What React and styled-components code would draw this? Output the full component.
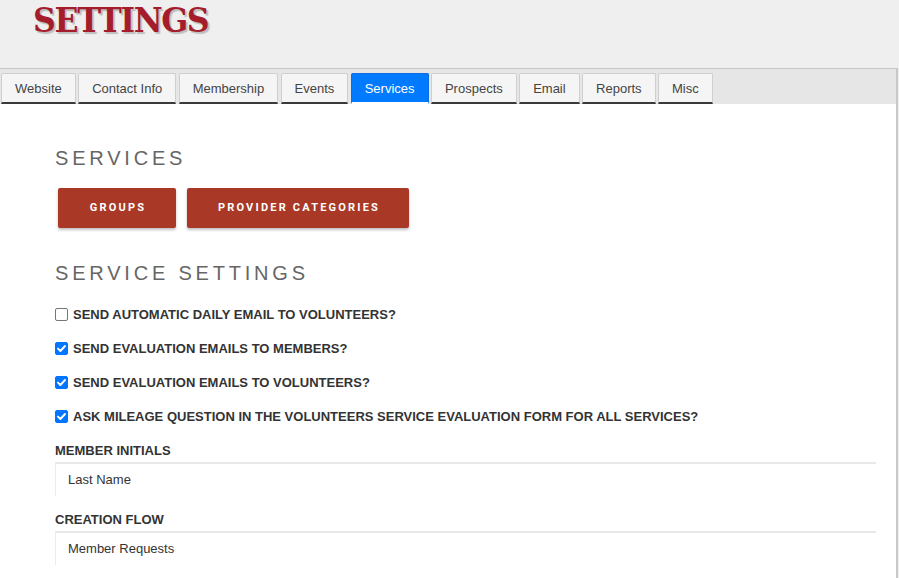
import React from "react";
import styled, { createGlobalStyle } from "styled-components";

const Global = createGlobalStyle`
  html, body { margin: 0; padding: 0; background: #efefef; }
  body { font-family: Arial, "Liberation Sans", sans-serif; color: #333; overflow: hidden; }
  * { box-sizing: border-box; }
`;

const Page = styled.div`
  width: 899px;
  height: 578px;
  display: flex;
  flex-direction: column;
`;

const Header = styled.header`
  height: 68px;
  padding: 0 0 0 33px;
`;

const Title = styled.h1`
  margin: 0;
  font-family: "DejaVu Serif", serif;
  font-weight: 700;
  font-size: 34px;
  line-height: 40px;
  letter-spacing: -1.5px;
  color: #a51c2b;
  text-shadow: 2px 2px 1px #bdbdbd;
  transform: scaleX(0.93);
  transform-origin: left center;
`;

const Panel = styled.section`
  flex: 1;
  width: 898px;
  border-top: 1px solid #c8c8c8;
  border-right: 2px solid #c8c8c8;
  background: #fff;
  display: flex;
  flex-direction: column;
`;

const TabBar = styled.nav`
  background: #e6e6e6;
  height: 35px;
  padding: 4px 0 0 1px;
  display: flex;
  gap: 2.4px;
`;

const Tab = styled.button`
  height: 31px;
  padding: 0 13px;
  font-family: Arial, "Liberation Sans", sans-serif;
  font-size: 13px;
  color: ${(p) => (p.$active ? "#fff" : "#444")};
  background: ${(p) => (p.$active ? "#007bff" : "#f5f5f5")};
  border: 1px solid ${(p) => (p.$active ? "#0a6ee0" : "#cfcfcf")};
  border-bottom: 2px solid ${(p) => (p.$active ? "#ffffff" : "#3a3a3a")};
  border-radius: 2px 2px 0 0;
  cursor: pointer;
`;

const Content = styled.div`
  padding: 42px 20px 0 55px;
  display: flex;
  flex-direction: column;
`;

const SectionTitle = styled.h2`
  margin: 0;
  font-family: Arial, "Liberation Sans", sans-serif;
  font-weight: 400;
  font-size: 20px;
  line-height: 24px;
  letter-spacing: ${(p) => p.$spacing || "3.8px"};
  color: #666;
`;

const ButtonRow = styled.div`
  display: flex;
  gap: 11px;
  margin: 18px 0 33px 3px;
`;

const RedButton = styled.button`
  height: 40px;
  width: ${(p) => p.$w}px;
  background: #a93826;
  color: #fff;
  border: none;
  border-radius: 2px;
  box-shadow: 0 2px 3px rgba(0, 0, 0, 0.25);
  font-family: Roboto, Arial, sans-serif;
  font-weight: 700;
  font-size: 11px;
  letter-spacing: 2.2px;
  padding: 0 0 2px 2px;
  cursor: pointer;
`;

const CheckList = styled.div`
  display: flex;
  flex-direction: column;
  gap: 17px;
  margin-top: 21px;
`;

const CheckRow = styled.label`
  display: flex;
  align-items: center;
  gap: 5px;
  height: 17px;
  font-family: Arial, "Liberation Sans", sans-serif;
  font-weight: 700;
  font-size: 13px;
  color: #333;
  text-transform: uppercase;
`;

const Box = styled.span`
  width: 13px;
  height: 13px;
  border-radius: 2px;
  border: 1px solid ${(p) => (p.$checked ? "#0075ff" : "#767676")};
  background: ${(p) => (p.$checked ? "#0075ff" : "#fff")};
  display: flex;
  align-items: center;
  justify-content: center;
  flex-shrink: 0;
`;

const FieldLabel = styled.div`
  font-family: Arial, "Liberation Sans", sans-serif;
  font-weight: 700;
  font-size: 13px;
  color: #333;
  margin-top: ${(p) => p.$top}px;
  line-height: 16px;
`;

const Field = styled.div`
  margin-top: 3px;
  height: 34px;
  border-top: 2px solid #e8e8e8;
  border-left: 1px solid #ececec;
  padding: 0 0 2px 12px;
  display: flex;
  align-items: center;
  font-size: 13px;
  color: #333;
`;

function Check({ checked, children }) {
  return (
    <CheckRow>
      <Box $checked={checked}>
        {checked && (
          <svg width="11" height="11" viewBox="0 0 11 11">
            <path d="M2 5.6 L4.4 8 L9 3" fill="none" stroke="#fff" strokeWidth="1.9" strokeLinecap="round" strokeLinejoin="round" />
          </svg>
        )}
      </Box>
      {children}
    </CheckRow>
  );
}

const tabs = ["Website", "Contact Info", "Membership", "Events", "Services", "Prospects", "Email", "Reports", "Misc"];

export default function App() {
  return (
    <Page>
      <Global />
      <Header>
        <Title>SETTINGS</Title>
      </Header>
      <Panel>
        <TabBar>
          {tabs.map((t) => (
            <Tab key={t} $active={t === "Services"}>{t}</Tab>
          ))}
        </TabBar>
        <Content>
          <SectionTitle $spacing="3.8px">SERVICES</SectionTitle>
          <ButtonRow>
            <RedButton $w={118}>GROUPS</RedButton>
            <RedButton $w={222}>PROVIDER CATEGORIES</RedButton>
          </ButtonRow>
          <SectionTitle $spacing="3.8px">SERVICE SETTINGS</SectionTitle>
          <CheckList>
            <Check>Send automatic daily email to volunteers?</Check>
            <Check checked>Send evaluation emails to members?</Check>
            <Check checked>Send evaluation emails to volunteers?</Check>
            <Check checked>Ask mileage question in the volunteers service evaluation form for all services?</Check>
          </CheckList>
          <FieldLabel $top={18}>MEMBER INITIALS</FieldLabel>
          <Field>Last Name</Field>
          <FieldLabel $top={16}>CREATION FLOW</FieldLabel>
          <Field>Member Requests</Field>
        </Content>
      </Panel>
    </Page>
  );
}
